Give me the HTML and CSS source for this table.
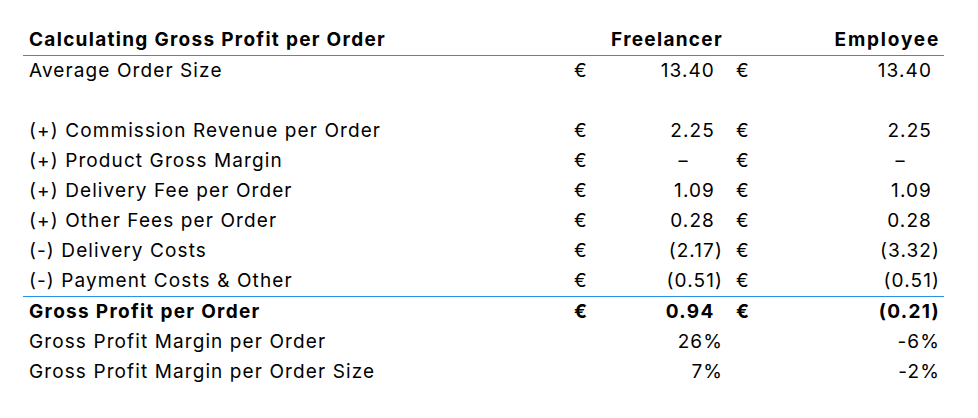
FILE: index.html
```html
<!DOCTYPE html>
<html lang="en">
<head>
<meta charset="utf-8">
<title>Gross Profit per Order</title>
<link rel="stylesheet" href="styles.css">
</head>
<body>
<table class="gp">
  <colgroup>
    <col class="c-label"><col class="c-eur1"><col class="c-val1"><col class="c-eur2"><col class="c-val2">
  </colgroup>
  <thead>
    <tr class="head">
      <th class="label">Calculating Gross Profit per Order</th>
      <th colspan="2" class="hval1">Freelancer</th>
      <th colspan="2" class="hval2">Employee</th>
    </tr>
  </thead>
  <tbody>
    <tr>
      <td class="label">Average Order Size</td>
      <td class="eur1">€</td><td class="val1">13.40<span class="p">)</span></td>
      <td class="eur2">€</td><td class="val2">13.40<span class="p">)</span></td>
    </tr>
    <tr><td class="label"></td><td></td><td></td><td></td><td></td></tr>
    <tr>
      <td class="label">(+) Commission Revenue per Order</td>
      <td class="eur1">€</td><td class="val1">2.25<span class="p">)</span></td>
      <td class="eur2">€</td><td class="val2">2.25<span class="p">)</span></td>
    </tr>
    <tr>
      <td class="label">(+) Product Gross Margin</td>
      <td class="eur1">€</td><td class="val1"><span class="dash">-</span><span class="p">00)</span></td>
      <td class="eur2">€</td><td class="val2"><span class="dash">-</span><span class="p">00)</span></td>
    </tr>
    <tr>
      <td class="label">(+) Delivery Fee per Order</td>
      <td class="eur1">€</td><td class="val1">1.09<span class="p">)</span></td>
      <td class="eur2">€</td><td class="val2">1.09<span class="p">)</span></td>
    </tr>
    <tr>
      <td class="label">(+) Other Fees per Order</td>
      <td class="eur1">€</td><td class="val1">0.28<span class="p">)</span></td>
      <td class="eur2">€</td><td class="val2">0.28<span class="p">)</span></td>
    </tr>
    <tr>
      <td class="label">(-) Delivery Costs</td>
      <td class="eur1">€</td><td class="val1">(2.17)</td>
      <td class="eur2">€</td><td class="val2">(3.32)</td>
    </tr>
    <tr>
      <td class="label">(-) Payment Costs &amp; Other</td>
      <td class="eur1">€</td><td class="val1">(0.51)</td>
      <td class="eur2">€</td><td class="val2">(0.51)</td>
    </tr>
    <tr class="total">
      <td class="label">Gross Profit per Order</td>
      <td class="eur1">€</td><td class="val1">0.94<span class="p">)</span></td>
      <td class="eur2">€</td><td class="val2">(0.21)</td>
    </tr>
    <tr>
      <td class="label">Gross Profit Margin per Order</td>
      <td class="eur1"></td><td class="val1">26%</td>
      <td class="eur2"></td><td class="val2">-6%</td>
    </tr>
    <tr>
      <td class="label">Gross Profit Margin per Order Size</td>
      <td class="eur1"></td><td class="val1">7%</td>
      <td class="eur2"></td><td class="val2">-2%</td>
    </tr>
  </tbody>
</table>
</body>
</html>
```
FILE: styles.css
```css
html, body {
  margin: 0;
  padding: 0;
  background: #ffffff;
}
body {
  padding: 25px 0 0 23px;
  font-family: Inter, "Liberation Sans", sans-serif;
  font-size: 19px;
  letter-spacing: 1.1px;
  color: #000000;
}
.gp {
  border-collapse: collapse;
  table-layout: fixed;
  width: 921px;
}
.c-label { width: 545px; }
.c-eur1 { width: 32px; }
.c-val1 { width: 127px; }
.c-eur2 { width: 35px; }
.c-val2 { width: 182px; }
.gp th, .gp td {
  height: 30px;
  padding: 0;
  white-space: nowrap;
  vertical-align: middle;
  line-height: 30px;
}
.gp th {
  font-weight: 700;
  letter-spacing: 1.3px;
}
.head th {
  border-bottom: 1px solid #2893e6;
}
.hval2 {
  letter-spacing: 1.8px !important;
}
.label {
  text-align: left;
  padding-left: 6px !important;
}
.eur1 {
  padding-left: 6px !important;
}
.eur2 {
  padding-left: 9px !important;
}
.val1, .val2, .hval1, .hval2 {
  text-align: right;
}
.val1, .val2 { padding-right: 4px !important; }
.hval1 { padding-right: 4px !important; }
.hval2 { padding-right: 4px !important; }
.p {
  visibility: hidden;
}
.dash {
  display: inline-block;
  transform: scaleX(1.5);
}
.total td {
  border-top: 1px solid #2893e6;
  font-weight: 700;
  letter-spacing: 1.3px;
}
```
